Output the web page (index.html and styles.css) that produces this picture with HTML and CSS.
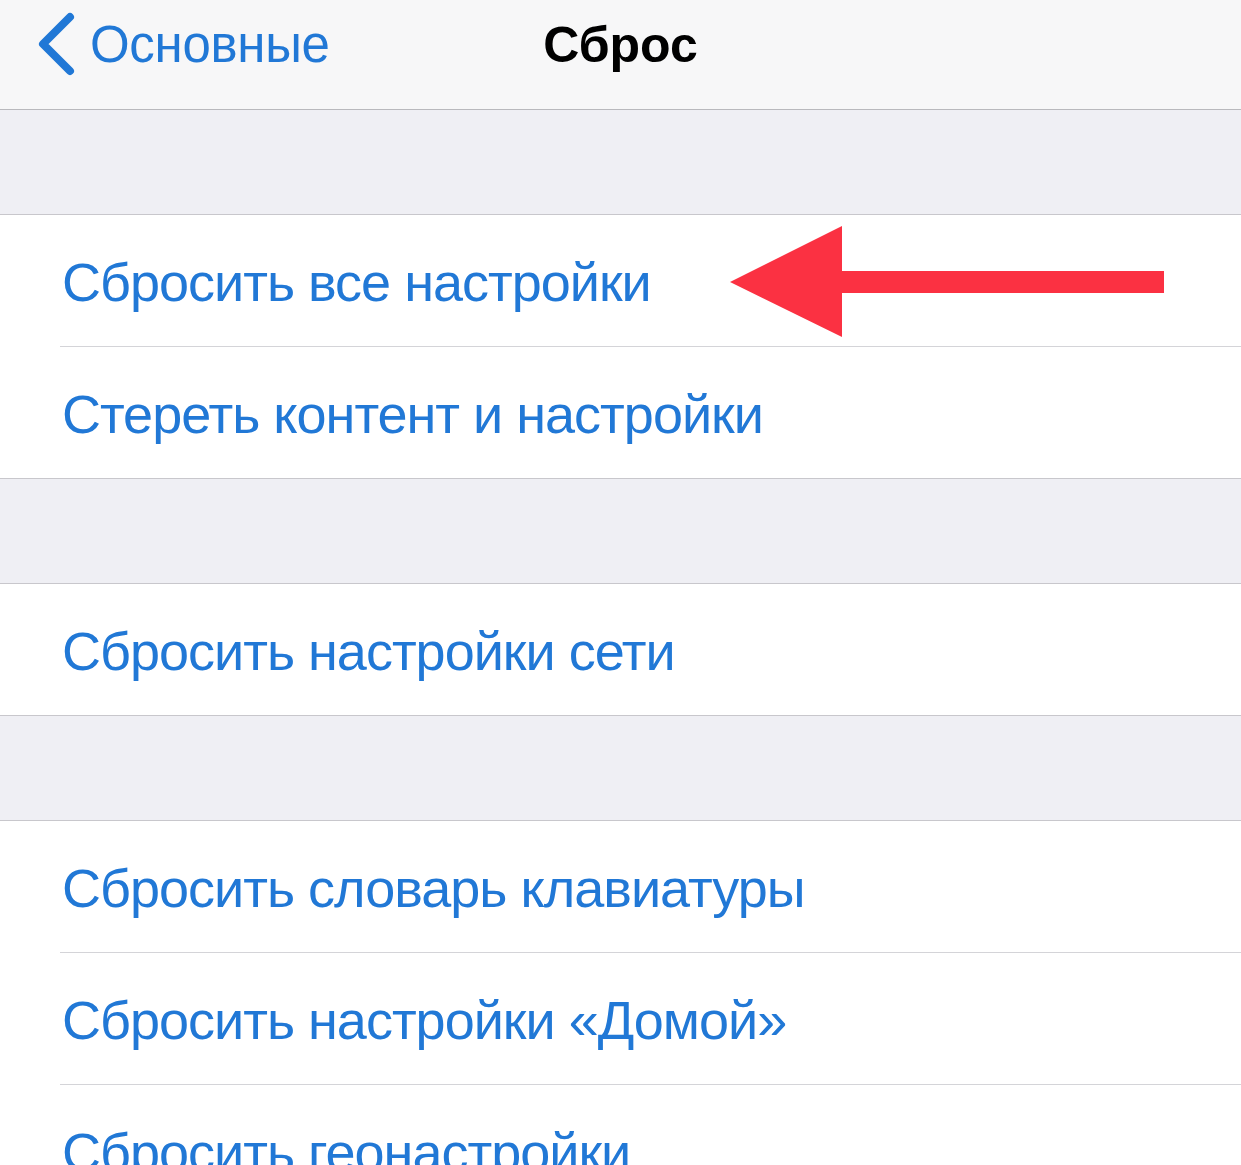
FILE: index.html
```html
<!DOCTYPE html>
<html lang="ru">
<head>
  <meta charset="UTF-8" />
  <title>Сброс</title>
  <meta name="viewport" content="width=device-width, initial-scale=1.0"/>
  <link rel="stylesheet" href="styles.css">
</head>
<body>

  <header class="nav-bar">
    <a class="back-link" href="#">
      <svg class="back-icon" width="40" height="64" viewBox="0 0 40 64">
        <path d="M34 5 L7 32 L34 59" fill="none" stroke="#2178d6" stroke-width="8" stroke-linecap="round" stroke-linejoin="round"/>
      </svg>
      <span>Основные</span>
    </a>
    <h1 class="nav-title">Сброс</h1>
  </header>

  <div class="gap"></div>

  <ul class="group">
    <li class="row">
      Сбросить все настройки
      <svg class="arrow" width="440" height="114" viewBox="0 0 440 114">
        <polygon points="0,56 112,0 112,45 434,45 434,67 112,67 112,111" fill="#fb3142"/>
      </svg>
    </li>
    <li class="row">Стереть контент и настройки</li>
  </ul>

  <div class="gap"></div>

  <ul class="group">
    <li class="row">Сбросить настройки сети</li>
  </ul>

  <div class="gap"></div>

  <ul class="group">
    <li class="row">Сбросить словарь клавиатуры</li>
    <li class="row">Сбросить настройки «Домой»</li>
    <li class="row">Сбросить геонастройки</li>
  </ul>

</body>
</html>
```

FILE: styles.css
```css
body {
  margin: 0;
  font-family: 'Liberation Sans', Arial, sans-serif;
  background-color: #efeff4;
  overflow: hidden;
}

.nav-bar {
  position: relative;
  height: 109px;
  background-color: #f7f7f8;
  border-bottom: 1px solid #b9b9bd;
}

.back-link {
  position: absolute;
  left: 36px;
  top: 12px;
  display: flex;
  align-items: center;
  gap: 14px;
  color: #2178d6;
  text-decoration: none;
  font-size: 51px;
  letter-spacing: -0.3px;
}

.back-icon {
  display: block;
}

.nav-title {
  margin: 0;
  text-align: center;
  line-height: 90px;
  font-size: 50px;
  font-weight: bold;
  color: #000;
}

.gap {
  height: 104px;
}

.group {
  list-style: none;
  margin: 0;
  padding: 0 0 0 60px;
  background-color: #fff;
  border-top: 1px solid #c8c7cc;
  border-bottom: 1px solid #c8c7cc;
}

.row {
  position: relative;
  height: 131px;
  line-height: 134px;
  font-size: 54px;
  letter-spacing: -1px;
  color: #2178d6;
  padding-left: 2px;
  border-bottom: 1px solid #d4d4d8;
}

.row:last-child {
  border-bottom: none;
}

.arrow {
  position: absolute;
  left: 670px;
  top: 11px;
}
```
